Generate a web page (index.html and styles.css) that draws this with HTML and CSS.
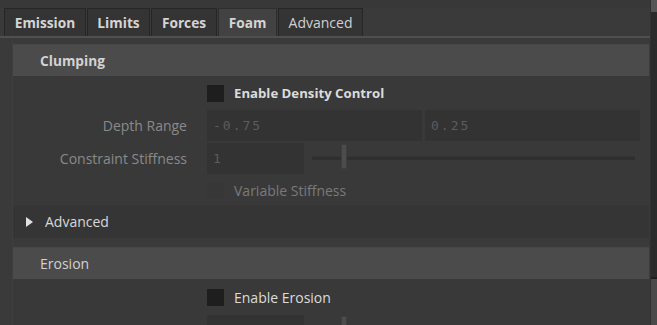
FILE: index.html
```html
<!DOCTYPE html>
<html>
<head>
<meta charset="utf-8">
<link rel="stylesheet" href="styles.css">
</head>
<body>
<div class="frame">
  <div class="main">
    <div class="topstrip"></div>
    <div class="tabs">
      <div class="tab">Emission</div>
      <div class="tab">Limits</div>
      <div class="tab">Forces</div>
      <div class="tab active">Foam</div>
      <div class="tab light">Advanced</div>
    </div>
    <div class="rule"></div>
    <div class="content">
      <div class="header bold-h">Clumping</div>
      <div class="panel">
        <div class="row r-check">
          <div class="label"></div>
          <div class="cb"></div>
          <div class="cb-text strong">Enable Density Control</div>
        </div>
        <div class="row r-field">
          <div class="label">Depth Range</div>
          <div class="field wide">-0.75</div>
          <div class="field wide">0.25</div>
        </div>
        <div class="row r-field">
          <div class="label">Constraint Stiffness</div>
          <div class="field short">1</div>
          <div class="slider"><div class="track"></div><div class="knob"></div></div>
        </div>
        <div class="row r-var">
          <div class="label"></div>
          <div class="cb faint"></div>
          <div class="cb-text dim">Variable Stiffness</div>
        </div>
      </div>
      <div class="folder"><span class="tri"></span>Advanced</div>
      <div class="header">Erosion</div>
      <div class="panel">
        <div class="row r-check2">
          <div class="label"></div>
          <div class="cb"></div>
          <div class="cb-text">Enable Erosion</div>
        </div>
        <div class="row r-field">
          <div class="label">Depth Range</div>
          <div class="field short"></div>
          <div class="slider"><div class="knob"></div></div>
        </div>
      </div>
    </div>
  </div>
  <div class="scroll">
    <div class="thumb-top"></div>
    <div class="scroll-mid"></div>
    <div class="thumb-bot"></div>
  </div>
</div>
</body>
</html>
```
FILE: styles.css
```css
html, body {
  margin: 0;
  padding: 0;
  background: #3a3a3a;
  width: 657px;
  height: 325px;
  overflow: hidden;
  font-family: "Open Sans", "Lato", sans-serif;
  font-size: 14px;
  color: #d6d6d6;
}
.frame {
  display: flex;
  height: 325px;
  overflow: hidden;
}
.main {
  flex: 1;
  display: flex;
  flex-direction: column;
  min-width: 0;
  overflow: hidden;
}
.main > *, .content > *, .panel > * {
  flex: none;
}
.topstrip {
  height: 8px;
  background: #383838;
}
.tabs {
  display: flex;
  height: 28px;
  padding-left: 4px;
}
.tab {
  box-sizing: border-box;
  height: 28px;
  display: flex;
  align-items: center;
  justify-content: center;
  background: #343434;
  border: 1px solid #262626;
  border-bottom: none;
  font-weight: 700;
  font-size: 13.7px;
  color: #d4d4d4;
  margin-right: 1px;
}
.tab:nth-child(1) { width: 82px; }
.tab:nth-child(2) { width: 63px; }
.tab:nth-child(3) { width: 66px; }
.tab:nth-child(4) { width: 59px; }
.tab:nth-child(5) { width: 85px; }
.tab.active {
  background: #424242;
  border-color: #2e2e2e;
}
.tab.light {
  font-weight: 400;
  font-size: 14px;
  color: #d0d0d0;
}
.rule {
  height: 2px;
  background: #4f4f4f;
}
.content {
  flex: 1;
  margin-left: 12px;
  border-left: 1px solid #3f3f3f;
  padding-top: 6px;
  padding-right: 1px;
  display: flex;
  flex-direction: column;
}
.header {
  height: 32px;
  background: #4b4b4b;
  display: flex;
  align-items: center;
  padding-left: 27px;
  color: #d2d2d2;
  border-top: 1px solid #474747;
  box-sizing: border-box;
}
.header.bold-h {
  font-weight: 700;
  font-size: 13.7px;
}
.panel {
  background: #393939;
  display: flex;
  flex-direction: column;
}
.row {
  display: flex;
  align-items: center;
}
.label {
  width: 174px;
  padding-right: 20px;
  text-align: right;
  color: #8a8a8a;
  flex: none;
}
.r-check { height: 34px; }
.r-check2 { height: 36px; }
.r-field { height: 31px; margin-bottom: 2px; }
.r-var { height: 29px; }
.cb {
  width: 17px;
  height: 17px;
  background: #1e1e1e;
  flex: none;
}
.cb.faint {
  background: #373737;
}
.cb-text {
  margin-left: 10px;
  color: #dcdcdc;
}
.cb-text.strong {
  font-weight: 700;
  font-size: 13.2px;
}
.cb-text.dim {
  color: #7a7a7a;
}
.field {
  box-sizing: border-box;
  height: 31px;
  background: #333333;
  font-family: "DejaVu Sans Mono", monospace;
  font-size: 13px;
  letter-spacing: 2px;
  color: #5c5c5c;
  padding-left: 6px;
  display: flex;
  align-items: center;
  flex: none;
}
.field.wide {
  width: 215px;
  margin-right: 3px;
}
.field.short {
  width: 97px;
}
.slider {
  position: relative;
  width: 323px;
  height: 31px;
  margin-left: 8px;
}
.track {
  position: absolute;
  left: 0;
  right: 0;
  top: 13px;
  height: 3px;
  background: #2f2f2f;
  border-top: 1px solid #343434;
}
.knob {
  position: absolute;
  left: 29px;
  top: 1px;
  width: 6px;
  height: 25px;
  background: #4c4c4c;
  border: 1px solid #3e3e3e;
  box-sizing: border-box;
}
.folder {
  height: 33px;
  background: #353535;
  display: flex;
  align-items: center;
  padding-left: 13px;
  color: #d8d8d8;
  margin-bottom: 9px;
}
.tri {
  width: 0;
  height: 0;
  border-top: 5px solid transparent;
  border-bottom: 5px solid transparent;
  border-left: 7px solid #e0e0e0;
  margin-right: 12px;
}
.scroll {
  width: 6px;
  display: flex;
  flex-direction: column;
  background: #2a2a2a;
  border-left: 1px solid #303030;
}
.scroll > * { flex: none; }
.thumb-top {
  height: 12px;
  background: #555555;
}
.scroll-mid {
  flex: 1 1 auto;
  background: #2b2b2b;
}
.thumb-bot {
  height: 46px;
  background: #4a4a4a;
  border-top: 2px solid #1f1f1f;
}
```
